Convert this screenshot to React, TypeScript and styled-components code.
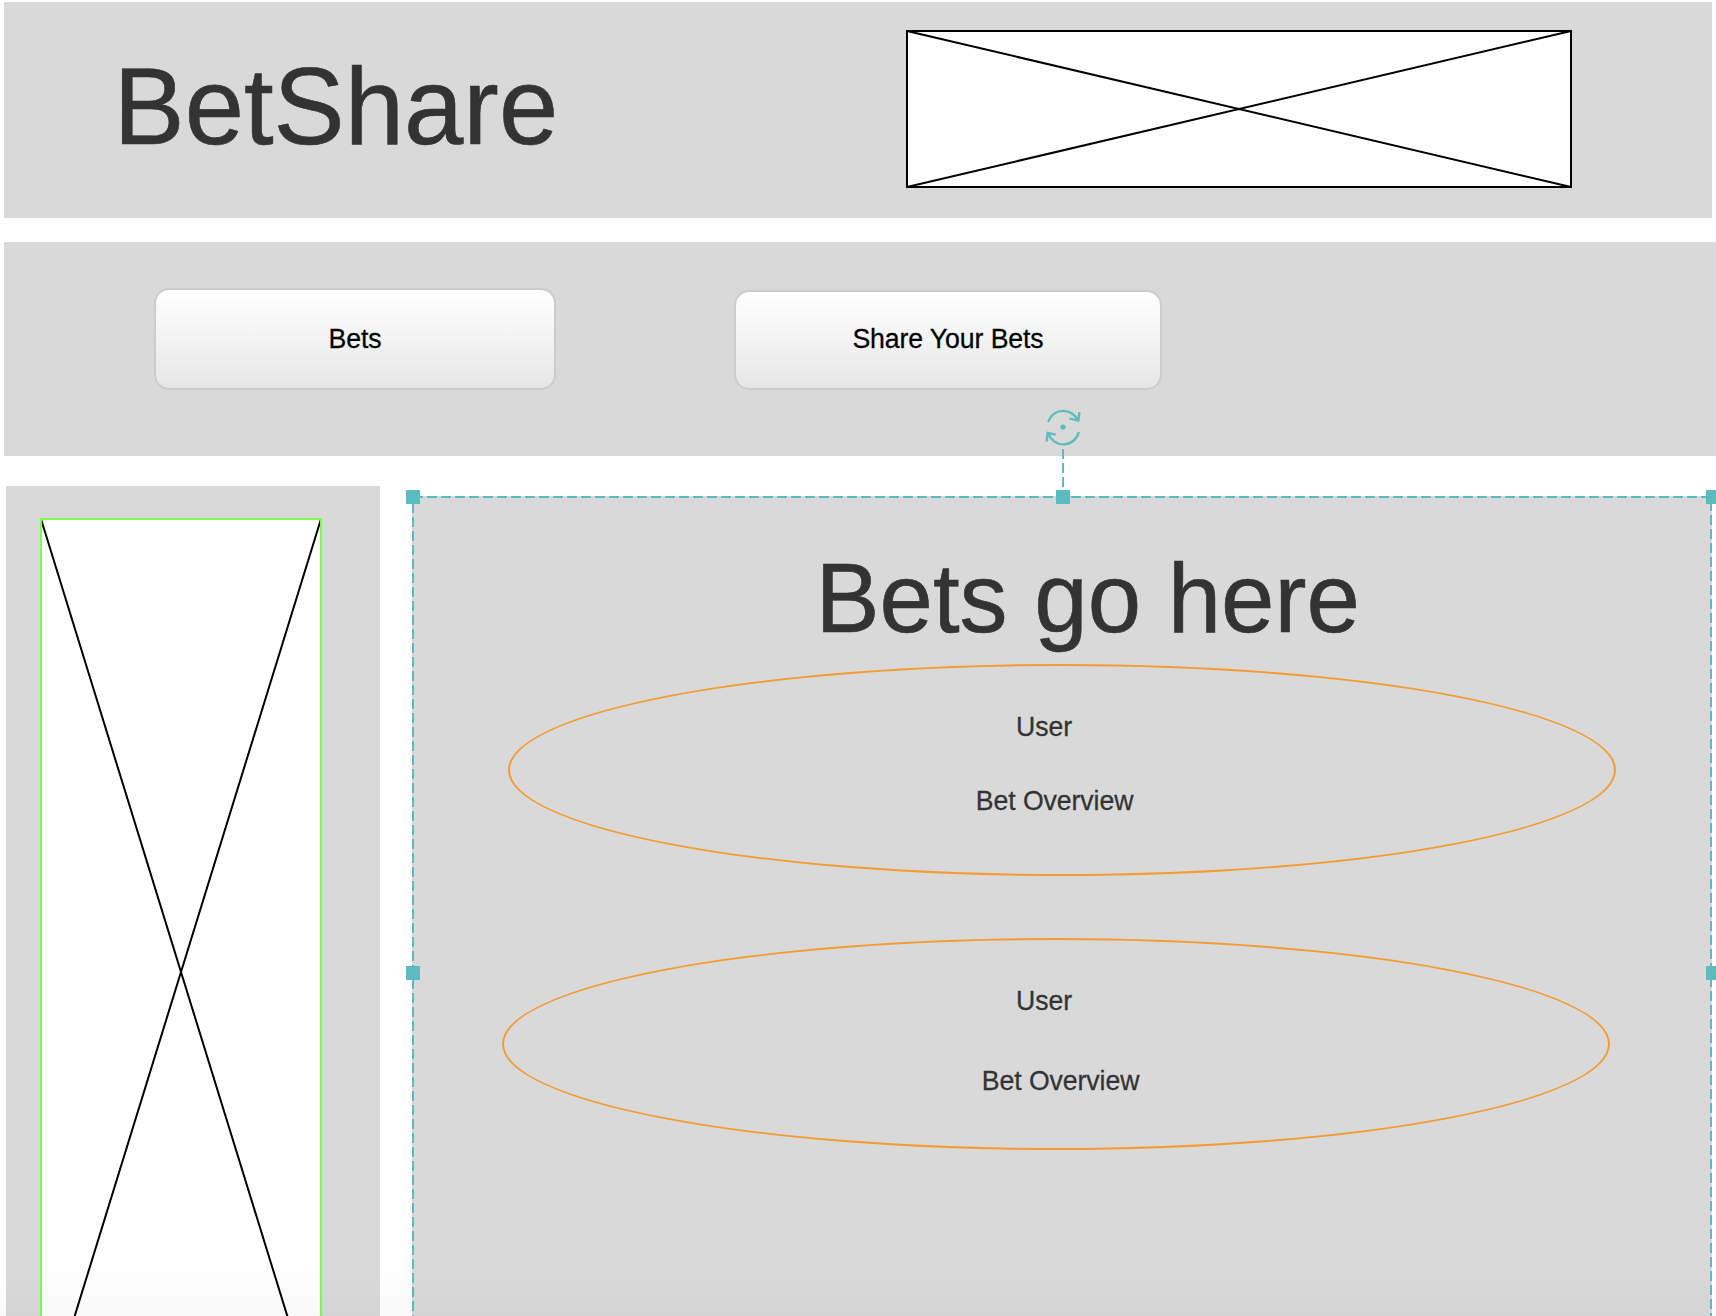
import React from "react";
import styled, { createGlobalStyle } from "styled-components";

const TEAL = "#5bbcbf";
const GREY = "#d9d9d9";

const GlobalStyle = createGlobalStyle`
  *, *::before, *::after { box-sizing: border-box; }
  html, body { margin: 0; padding: 0; overflow: hidden; background: #fff; }
  body { font-family: "Liberation Sans", Arial, Helvetica, sans-serif; color: #333; }
`;

const Page = styled.div`
  position: relative;
  width: 1716px;
  height: 1316px;
  padding: 2px 0 0 4px;
  overflow: hidden;
  display: flex;
  flex-direction: column;
`;

const Header = styled.header`
  flex: none;
  display: flex;
  align-items: flex-start;
  justify-content: space-between;
  width: 1708px;
  height: 216px;
  padding: 28px 140px 0 109.5px;
  background: ${GREY};
`;

const Text = styled.span<{ $size: number; $line: number }>`
  display: block;
  font-size: ${(p) => p.$size}px;
  line-height: ${(p) => p.$line}px;
  white-space: nowrap;
  -webkit-text-stroke: ${(p) => (p.$size > 50 ? 0.6 : 0.25)}px currentColor;
  transform: scaleY(1.025);
  transform-origin: 0 ${(p) => p.$line / 2 + p.$size * 0.3465}px;
`;

const Brand = styled.h1`
  margin: 17px 0 0;
  font-weight: 400;
`;

const Frame = styled.svg`
  display: block;
  flex: none;
`;

const Nav = styled.nav`
  flex: none;
  display: flex;
  align-items: flex-end;
  gap: 178px;
  width: 1712px;
  height: 214px;
  margin-top: 24px;
  padding: 0 0 66px 150px;
  background: ${GREY};
`;

const NavButton = styled.button<{ $width: number; $height: number }>`
  display: flex;
  justify-content: center;
  align-items: flex-end;
  width: ${(p) => p.$width}px;
  height: ${(p) => p.$height}px;
  padding: 0 0 35px;
  border: 2px solid #ccc;
  border-radius: 15px;
  background: linear-gradient(#fff, #e6e6e6) padding-box;
  font-family: inherit;
  letter-spacing: -0.1px;
  color: #000;
`;

const Columns = styled.div`
  flex: none;
  display: flex;
  align-items: flex-start;
  gap: 32px;
  margin-top: 30px;
  padding-left: 2px;
`;

const Sidebar = styled.aside`
  width: 374px;
  height: 970px;
  padding: 32px 0 0 34px;
  background: ${GREY};
`;

const Panel = styled.main`
  position: relative;
  display: flex;
  flex-direction: column;
  align-items: flex-start;
  width: 1300px;
  height: 952px;
  margin-top: 10px;
  background: ${GREY};
`;

const Heading = styled.h2`
  margin: 48px 0 0 403.5px;
  font-weight: 400;
`;

const Bet = styled.section<{ $left: number; $top: number; $gap: number }>`
  display: flex;
  flex-direction: column;
  align-items: flex-start;
  gap: ${(p) => p.$gap}px;
  width: 1108px;
  height: 212px;
  margin: ${(p) => p.$top}px 0 0 ${(p) => p.$left}px;
  padding-top: 47px;
  border: 2px solid #f39c32;
  border-radius: 50%;
`;

const Line = styled.div<{ $left: number }>`
  margin-left: ${(p) => p.$left}px;
  letter-spacing: -0.08px;
`;

const Selection = styled.svg`
  position: absolute;
  left: -12px;
  top: -96px;
  overflow: visible;
  pointer-events: none;
`;

const BottomShade = styled.div`
  position: absolute;
  left: 0;
  right: 0;
  bottom: 0;
  height: 64px;
  background: linear-gradient(rgba(0, 0, 0, 0), rgba(0, 0, 0, 0.008) 50%, rgba(0, 0, 0, 0.024));
  pointer-events: none;
`;

type PlaceholderProps = { width: number; height: number; stroke: string };

function Placeholder({ width, height, stroke }: PlaceholderProps) {
  return (
    <Frame width={width} height={height} fill="none" strokeWidth={2}>
      <rect x={1} y={1} width={width - 2} height={height - 2} fill="#fff" />
      <path
        d={`M1 1L${width - 1} ${height - 1}M${width - 1} 1L1 ${height - 1}`}
        stroke="#000"
      />
      <rect x={1} y={1} width={width - 2} height={height - 2} stroke={stroke} />
    </Frame>
  );
}

const handles = [
  [13, 97],
  [663, 97],
  [1313, 97],
  [13, 573],
  [1313, 573],
];

function SelectionFrame() {
  return (
    <Selection width={1324} height={1060} fill="none" stroke={TEAL} strokeWidth={2}>
      <path d="M13 97H1311V1047H13Z" strokeDasharray="10 4" />
      <path d="M663 49V97" strokeDasharray="10 4" />
      <g transform="translate(663 27)" strokeWidth={2.3}>
        <path d="M-14.8 -5.2A15.8 15.8 0 0 1 14.8 -6.6" />
        <path d="M6.3 -8.5L15.4 -6.4L16.4 -15" />
        <path d="M15.8 5A15.8 15.8 0 0 1 -14.8 6" />
        <path d="M-7.2 7.6L-15.4 5.8L-16.4 14.6" />
        <circle r={2.6} fill={TEAL} stroke="none" />
      </g>
      {handles.map(([x, y]) => (
        <rect key={`${x}-${y}`} x={x - 7} y={y - 7} width={14} height={14} fill={TEAL} stroke="none" />
      ))}
    </Selection>
  );
}

const bets = [
  { left: 96, top: 10, gap: 46, user: 506, overview: 465.8 },
  { left: 90, top: 62, gap: 52, user: 512, overview: 477.8 },
];

export default function App() {
  return (
    <Page>
      <GlobalStyle />
      <Header>
        <Brand>
          <Text $size={106.67} $line={120}>BetShare</Text>
        </Brand>
        <Placeholder width={666} height={158} stroke="#000" />
      </Header>
      <Nav>
        <NavButton $width={402} $height={102}>
          <Text $size={26.67} $line={28}>Bets</Text>
        </NavButton>
        <NavButton $width={428} $height={100}>
          <Text $size={26.67} $line={28}>Share Your Bets</Text>
        </NavButton>
      </Nav>
      <Columns>
        <Sidebar>
          <Placeholder width={282} height={908} stroke="#7cfc4e" />
        </Sidebar>
        <Panel>
          <Heading>
            <Text $size={96} $line={110}>Bets go here</Text>
          </Heading>
          {bets.map((bet) => (
            <Bet key={bet.left} $left={bet.left} $top={bet.top} $gap={bet.gap}>
              <Line $left={bet.user}>
                <Text $size={26.67} $line={28}>User</Text>
              </Line>
              <Line $left={bet.overview}>
                <Text $size={26.67} $line={28}>Bet Overview</Text>
              </Line>
            </Bet>
          ))}
          <SelectionFrame />
        </Panel>
      </Columns>
      <BottomShade />
    </Page>
  );
}
